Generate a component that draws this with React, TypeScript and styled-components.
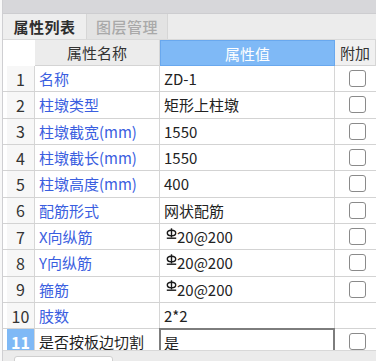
import React from "react";
import styled, { createGlobalStyle } from "styled-components";

const Global = createGlobalStyle`
  html, body { margin: 0; padding: 0; background: #ffffff; overflow: hidden; }
  body { font-family: "Noto Sans CJK SC", "Noto Sans", sans-serif; }
  * { box-sizing: border-box; }
`;

const Frame = styled.div`
  width: 376px;
  height: 361px;
  display: flex;
  overflow: hidden;
  background: #f7f7f7;
`;

const Edge = styled.div`
  width: 3px;
  flex: none;
  background: #f8f8f8;
  border-right: 1px solid #cfcfd2;
`;

const Panel = styled.div`
  flex: 1;
  display: flex;
  flex-direction: column;
  min-width: 0;
`;

const TopBand = styled.div`
  height: 14px;
  flex: none;
  background: #d7d7da;
  border-bottom: 1px solid #cdcdd0;
`;

const TabBar = styled.div`
  height: 26px;
  flex: none;
  display: flex;
  background: #ececec;
  border-bottom: 1px solid #d9d9d9;
`;

const Tab = styled.div<{ $active?: boolean }>`
  width: ${(p) => (p.$active ? 84 : 81)}px;
  display: flex;
  align-items: center;
  justify-content: center;
  font-size: 15px;
  letter-spacing: 0.5px;
  font-weight: ${(p) => (p.$active ? 600 : 500)};
  color: ${(p) => (p.$active ? "#2e2e2e" : "#a9a9a9")};
  background: ${(p) => (p.$active ? "#eeeeee" : "#e3e3e3")};
  border-right: 1px solid #d6d6d6;
`;

const Table = styled.div`
  flex: 1;
  overflow: hidden;
  background: #ffffff;
`;

const COLS = "32px 125px 175px 1fr";

const HeadRow = styled.div`
  display: grid;
  grid-template-columns: ${COLS};
  height: 26px;
`;

const HeadCell = styled.div<{ $kind: "idx" | "name" | "value" | "extra" }>`
  display: flex;
  align-items: center;
  justify-content: ${(p) => (p.$kind === "extra" ? "flex-start" : "center")};
  padding-left: ${(p) => (p.$kind === "extra" ? "5px" : "0")};
  font-size: 15px;
  white-space: nowrap;
  overflow: hidden;
  color: ${(p) => (p.$kind === "value" ? "#ffffff" : "#333333")};
  background: ${(p) =>
    p.$kind === "idx"
      ? "#ffffff"
      : p.$kind === "value"
      ? "#7fb9f6"
      : p.$kind === "name"
      ? "#ececec"
      : "#f0f0f0"};
  border: ${(p) => (p.$kind === "value" ? "1px solid #69a8ee" : "none")};
  border-bottom: ${(p) =>
    p.$kind === "value" ? "1px solid #69a8ee" : p.$kind === "idx" ? "none" : "1px solid #d4d4d4"};
  border-right: ${(p) => (p.$kind === "name" || p.$kind === "extra" ? "1px solid #d6d6d6" : undefined)};
`;

const Row = styled.div`
  display: grid;
  grid-template-columns: ${COLS};
  height: 26.33px;
  border-bottom: 1px solid #d3d3d3;
`;

const IdxCell = styled.div<{ $selected?: boolean }>`
  display: flex;
  align-items: center;
  justify-content: center;
  font-size: 16px;
  color: ${(p) => (p.$selected ? "#ffffff" : "#333333")};
  background: ${(p) => (p.$selected ? "#7fb9f6" : "#f7f7f7")};
  margin-left: 4px;
  border-right: 1px solid #d6d6d6;
  font-weight: ${(p) => (p.$selected ? 600 : 400)};
`;

const NameCell = styled.div<{ $selected?: boolean }>`
  display: flex;
  align-items: center;
  padding-left: 4px;
  font-size: 15px;
  white-space: nowrap;
  color: ${(p) => (p.$selected ? "#1f1f1f" : "#3a5ee0")};
  border-right: 1px solid #d6d6d6;
`;

const ValueCell = styled.div<{ $editing?: boolean }>`
  display: flex;
  align-items: center;
  padding-left: ${(p) => (p.$editing ? "3px" : "4px")};
  font-size: 15px;
  white-space: nowrap;
  color: #222222;
  border-right: ${(p) => (p.$editing ? "2px solid #7d7d7d" : "1px solid #d6d6d6")};
  border-top: ${(p) => (p.$editing ? "2px solid #7d7d7d" : "none")};
  border-left: ${(p) => (p.$editing ? "2px solid #7d7d7d" : "none")};
  margin-left: ${(p) => (p.$editing ? "-1px" : "0")};
  margin-top: ${(p) => (p.$editing ? "-1px" : "0")};
`;

const ExtraCell = styled.div`
  display: flex;
  align-items: center;
  padding-left: 14px;
`;

const Check = styled.div`
  width: 17px;
  height: 17px;
  border: 1px solid #8a8a8a;
  border-radius: 3px;
  background: #ffffff;
`;

const BottomBar = styled.div`
  height: 11px;
  flex: none;
  background: #ebebeb;
  border-top: 1px solid #d8d8d8;
  padding: 5px 0 0 11px;
`;

const BottomButton = styled.div`
  width: 99px;
  height: 12px;
  background: #ffffff;
  border: 1px solid #cfcfcf;
  border-radius: 3px;
`;

const Rebar = styled.svg`
  width: 11px;
  height: 11px;
  margin-left: 2px;
  margin-right: 0px;
  margin-top: -7px;
  flex: none;
`;

const RebarMark = () => (
  <Rebar viewBox="0 0 11 11">
    <line x1="5.5" y1="0.3" x2="5.5" y2="9.5" stroke="#1a1a1a" strokeWidth="1.4" />
    <ellipse cx="5.5" cy="5" rx="4.2" ry="2.8" fill="none" stroke="#1a1a1a" strokeWidth="1.4" />
    <line x1="0.8" y1="10.2" x2="10.2" y2="10.2" stroke="#1a1a1a" strokeWidth="1.4" />
  </Rebar>
);

type RowData = { name: string; value: string; rebar?: boolean; check: boolean };

const rows: RowData[] = [
  { name: "名称", value: "ZD-1", check: true },
  { name: "柱墩类型", value: "矩形上柱墩", check: true },
  { name: "柱墩截宽(mm)", value: "1550", check: true },
  { name: "柱墩截长(mm)", value: "1550", check: true },
  { name: "柱墩高度(mm)", value: "400", check: true },
  { name: "配筋形式", value: "网状配筋", check: true },
  { name: "X向纵筋", value: "20@200", rebar: true, check: true },
  { name: "Y向纵筋", value: "20@200", rebar: true, check: true },
  { name: "箍筋", value: "20@200", rebar: true, check: true },
  { name: "肢数", value: "2*2", check: false },
  { name: "是否按板边切割", value: "是", check: true },
];

export default function App() {
  return (
    <>
      <Global />
      <Frame>
        <Edge />
        <Panel>
          <TopBand />
          <TabBar>
            <Tab $active>属性列表</Tab>
            <Tab>图层管理</Tab>
          </TabBar>
          <Table>
            <HeadRow>
              <HeadCell $kind="idx" />
              <HeadCell $kind="name">属性名称</HeadCell>
              <HeadCell $kind="value">属性值</HeadCell>
              <HeadCell $kind="extra">附加</HeadCell>
            </HeadRow>
            {rows.map((r, i) => {
              const selected = i === rows.length - 1;
              return (
                <Row key={i}>
                  <IdxCell $selected={selected}>{i + 1}</IdxCell>
                  <NameCell $selected={selected}>{r.name}</NameCell>
                  <ValueCell $editing={selected}>
                    {r.rebar && <RebarMark />}
                    {r.value}
                  </ValueCell>
                  <ExtraCell>{r.check && <Check />}</ExtraCell>
                </Row>
              );
            })}
          </Table>
          <BottomBar>
            <BottomButton />
          </BottomBar>
        </Panel>
      </Frame>
    </>
  );
}
